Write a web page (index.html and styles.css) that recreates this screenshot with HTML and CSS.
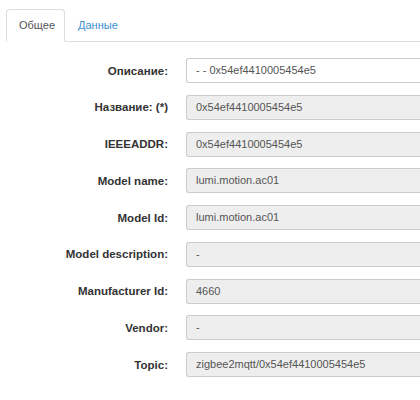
FILE: index.html
```html
<!DOCTYPE html>
<html>
<head>
<meta charset="utf-8">
<link rel="stylesheet" href="styles.css">
</head>
<body>
<div class="page">
  <ul class="tabs">
    <li class="tab active">Общее</li>
    <li class="tab">Данные</li>
  </ul>
  <div class="form">
    <label class="lbl">Описание:</label>
    <div class="inp editable">- - 0x54ef4410005454e5</div>
    <label class="lbl">Название: (*)</label>
    <div class="inp">0x54ef4410005454e5</div>
    <label class="lbl">IEEEADDR:</label>
    <div class="inp">0x54ef4410005454e5</div>
    <label class="lbl">Model name:</label>
    <div class="inp">lumi.motion.ac01</div>
    <label class="lbl">Model Id:</label>
    <div class="inp">lumi.motion.ac01</div>
    <label class="lbl">Model description:</label>
    <div class="inp">-</div>
    <label class="lbl">Manufacturer Id:</label>
    <div class="inp">4660</div>
    <label class="lbl">Vendor:</label>
    <div class="inp">-</div>
    <label class="lbl">Topic:</label>
    <div class="inp">zigbee2mqtt/0x54ef4410005454e5</div>
  </div>
</div>
</body>
</html>
```
FILE: styles.css
```css
html, body {
  margin: 0;
  padding: 0;
  background: #fff;
}
body {
  font-family: "Liberation Sans", Arial, sans-serif;
  color: #333;
}
.page {
  padding: 9px 0 0 6px;
}
.tabs {
  list-style: none;
  margin: 0;
  padding: 0;
  display: flex;
  border-bottom: 1px solid #ddd;
  height: 32px;
}
.tab {
  box-sizing: border-box;
  height: 33px;
  padding: 0 9px 0 11px;
  margin-right: 1px;
  font-size: 11px;
  line-height: 31px;
  color: #3a8fd0;
  border: 1px solid transparent;
  border-radius: 4px 4px 0 0;
}
.tab.active {
  padding-left: 12px;
  color: #555;
  background: #fff;
  border-color: #ddd #ddd transparent #ddd;
}
.form {
  margin-top: 16px;
  display: grid;
  grid-template-columns: 162px 1fr;
  column-gap: 18px;
  row-gap: 11.75px;
  align-items: center;
}
.lbl {
  text-align: right;
  font-weight: bold;
  font-size: 11.5px;
  color: #333;
}
.inp {
  box-sizing: border-box;
  height: 25px;
  border: 1px solid #ccc;
  border-right: none;
  border-radius: 3px 0 0 3px;
  background: #eee;
  padding: 0 9px;
  font-size: 11px;
  line-height: 23px;
  color: #555;
  white-space: nowrap;
  overflow: hidden;
}
.inp.editable {
  background: #fff;
}
```
